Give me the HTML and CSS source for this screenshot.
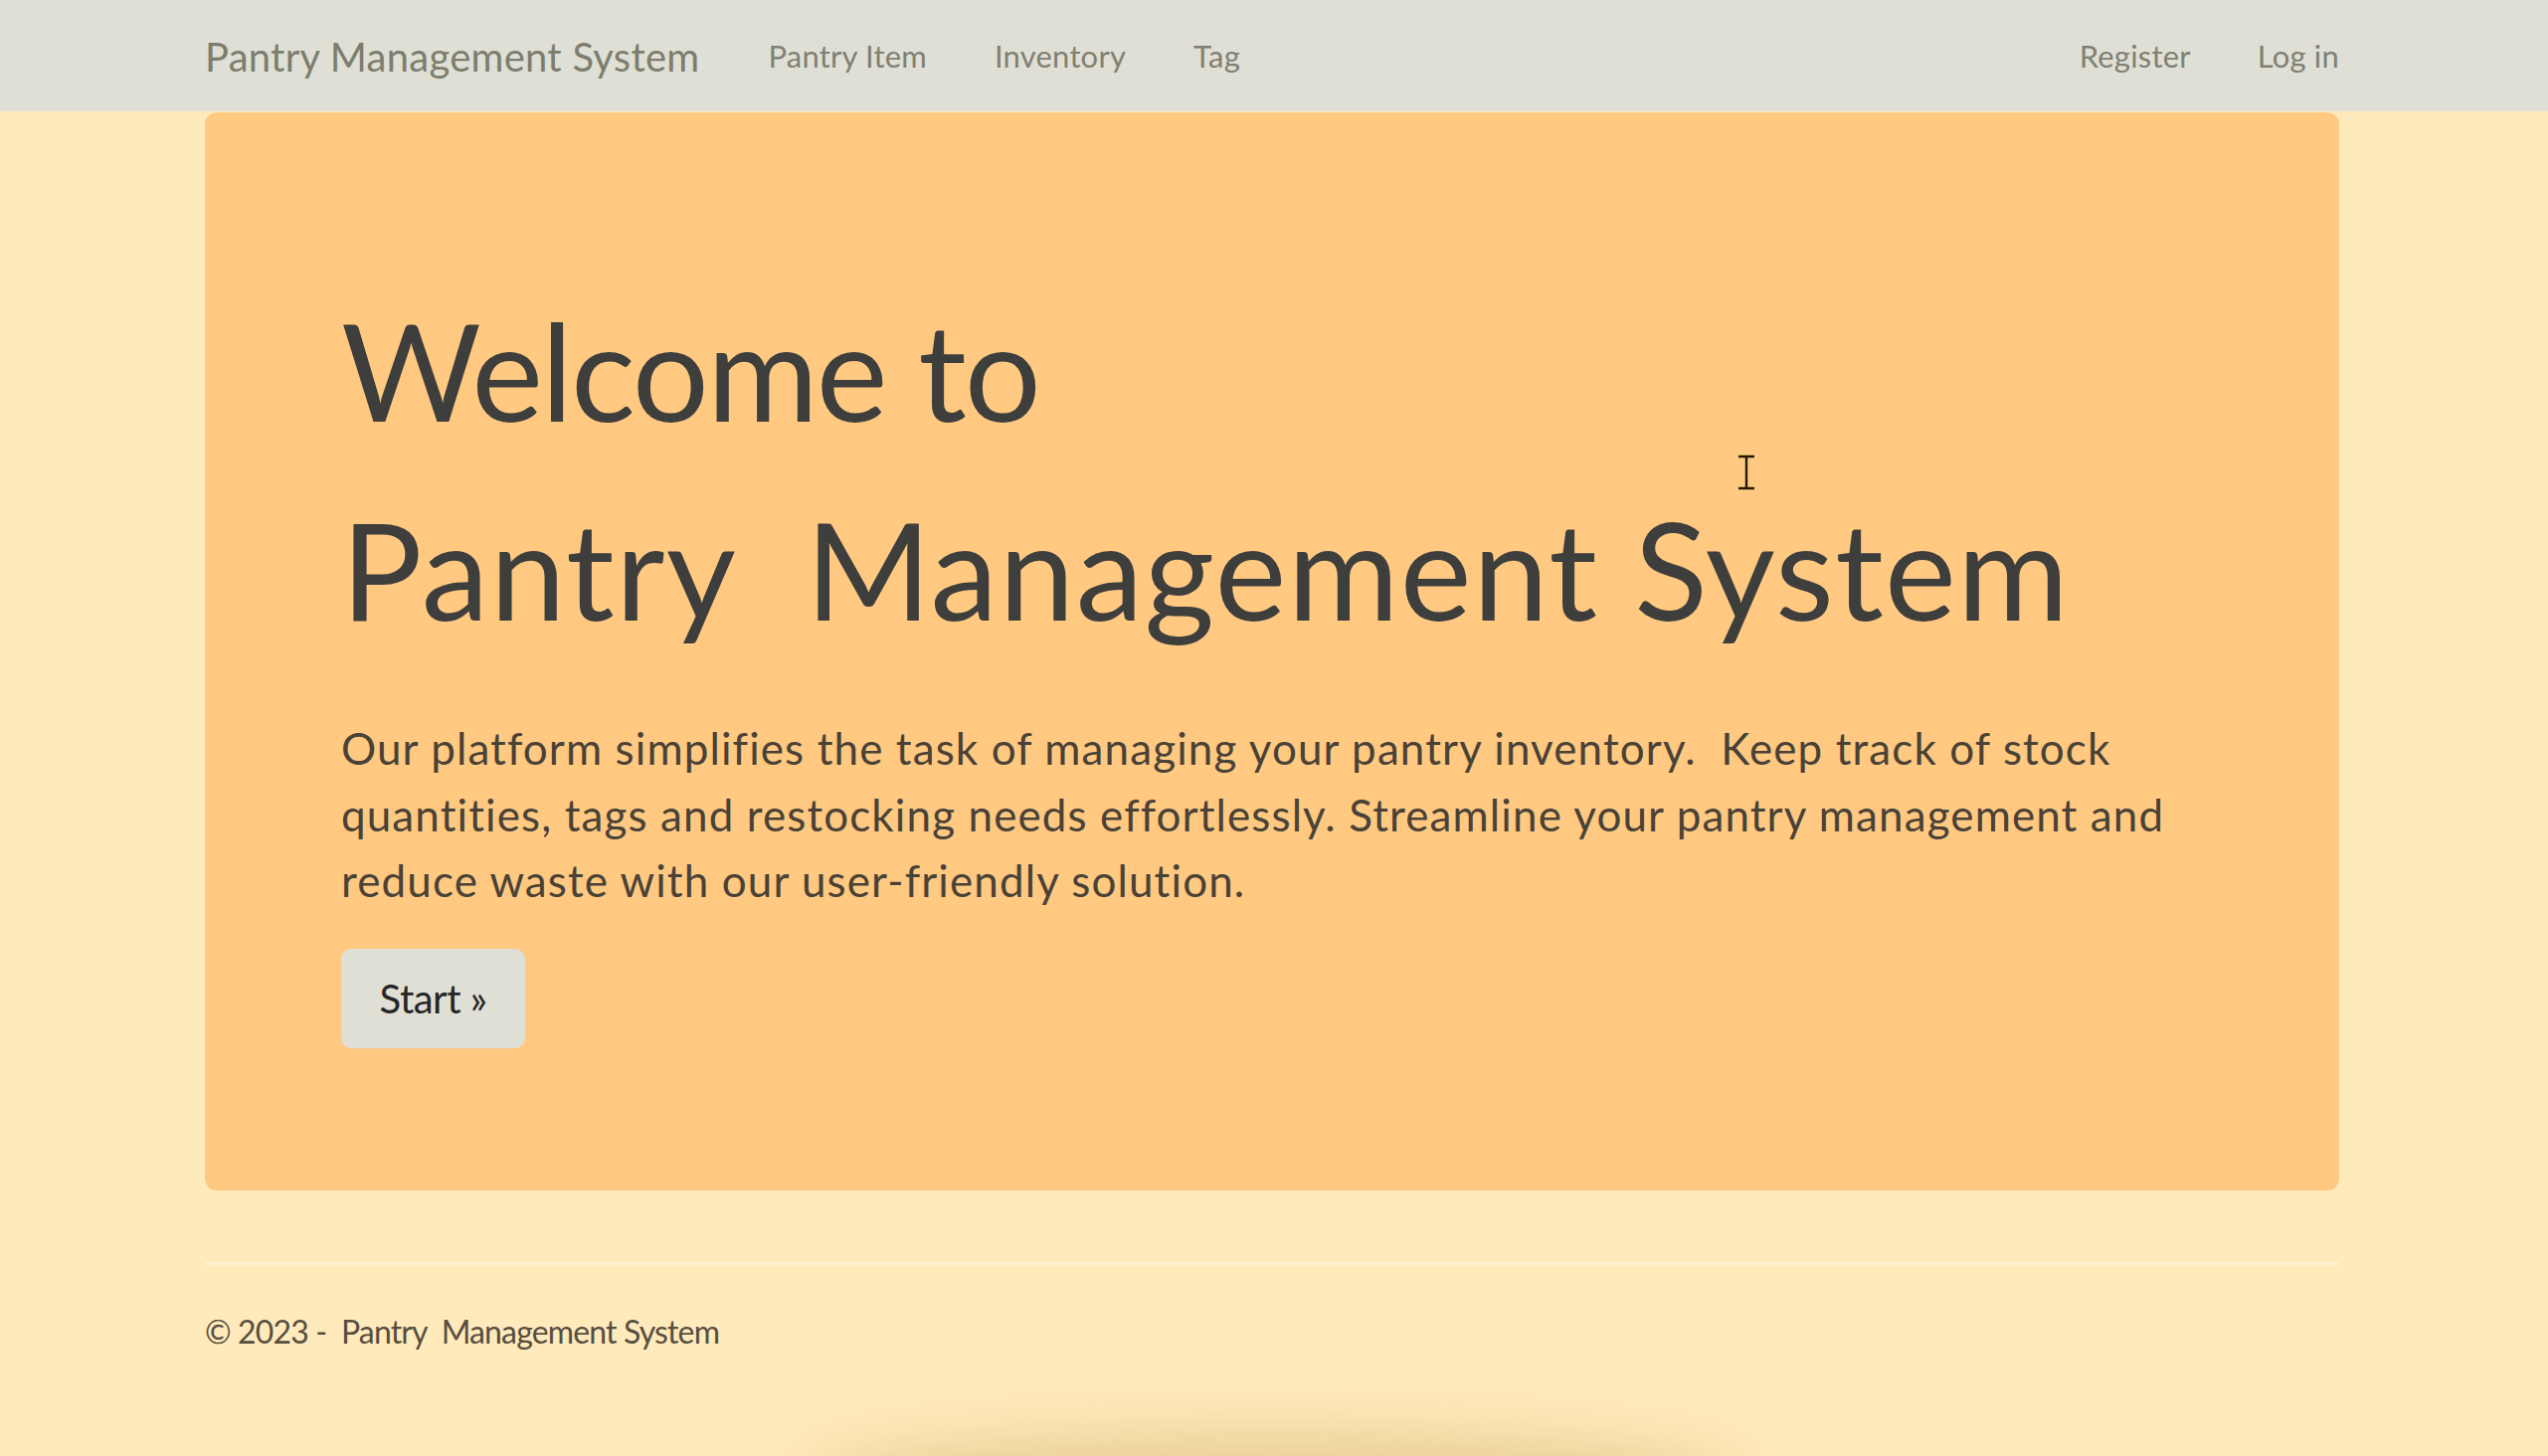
FILE: index.html
```html
<!DOCTYPE html>
<html lang="en">
<head>
<meta charset="utf-8">
<title>Home Page - Pantry Management System</title>
<link rel="stylesheet" href="styles.css">
</head>
<body>
<header class="navbar">
  <div class="container nav-inner">
    <a class="brand" href="#">Pantry Management System</a>
    <ul class="nav-list">
      <li><a href="#">Pantry Item</a></li>
      <li><a href="#">Inventory</a></li>
      <li><a href="#">Tag</a></li>
    </ul>
    <ul class="nav-list nav-right">
      <li><a href="#">Register</a></li>
      <li><a href="#">Log in</a></li>
    </ul>
  </div>
</header>
<main class="container">
  <section class="hero">
    <h1 class="hero-title"><span class="title-line">Welcome to</span><span class="title-line title-line-wide">Pantry&nbsp; Management System</span></h1>
    <p class="hero-text">Our platform simplifies the task of managing your pantry inventory.&nbsp; Keep track of stock quantities, tags and restocking needs effortlessly. Streamline your pantry management and reduce waste with our user-friendly solution.</p>
    <a class="btn-start" href="#">Start &raquo;</a>
  </section>
</main>
<footer class="container footer">
  <hr class="footer-rule">
  <p class="footer-text">&copy; 2023 -&nbsp; Pantry&nbsp; Management System</p>
</footer>
<svg class="cursor" width="24" height="38" viewBox="0 0 24 38" aria-hidden="true">
  <path d="M4 3 H20 M12 3 V35 M4 35 H20" stroke="#f6d27a" stroke-width="5" fill="none"/>
  <path d="M4 3 H20 M12 3 V35 M4 35 H20" stroke="#2a1606" stroke-width="2.4" fill="none"/>
</svg>
<div class="bottom-shade"></div>
</body>
</html>
```
FILE: styles.css
```css
* { box-sizing: border-box; }
html, body { margin: 0; padding: 0; }
body {
  background: #ffeabb;
  font-family: Lato, "Open Sans", sans-serif;
  color: #403c36;
  height: 1464px;
  overflow: hidden;
  position: relative;
}
a { text-decoration: none; }
.container {
  width: 2146px;
  margin-left: 206px;
}
.navbar {
  background: #dfdfd5;
  height: 112px;
}
.nav-inner {
  display: flex;
  align-items: center;
  height: 112px;
}
.brand {
  font-size: 40px;
  color: #7d7d6e;
  margin-right: 69px;
  padding-top: 2px;
  letter-spacing: 0.25px;
}
.nav-list {
  list-style: none;
  margin: 0;
  padding: 0;
  display: flex;
  gap: 68px;
}
.nav-list a {
  font-size: 31px;
  color: #808072;
  letter-spacing: 0.2px;
}
.nav-right { margin-left: auto; gap: 67px; }
.hero {
  background: #ffc982;
  border-radius: 12px;
  margin-top: 1px;
  height: 1084px;
  padding: 159px 137px 0;
}
.hero-title {
  margin: 0;
  font-weight: 400;
  font-size: 136px;
  line-height: 200px;
  color: #3e3e3c;
  letter-spacing: -2px;
}
.title-line { display: block; }
.title-line-wide { letter-spacing: 1.3px; }
.hero-text {
  margin: 47px 0 0;
  font-size: 44px;
  line-height: 66.5px;
  color: #4a4236;
  letter-spacing: 1.1px;
}
.btn-start {
  display: inline-flex;
  align-items: center;
  justify-content: center;
  margin-top: 35px;
  width: 185px;
  height: 100px;
  background: #dfdfd5;
  border-radius: 10px;
  font-size: 40px;
  color: #262626;
  letter-spacing: -0.5px;
}
.footer-rule {
  margin: 72px 0 0;
  border: 0;
  border-top: 3px solid #fff0d2;
}
.footer-text {
  margin: 47px 0 0;
  font-size: 32px;
  color: #574e40;
  letter-spacing: -0.85px;
}
.cursor {
  position: absolute;
  left: 1744px;
  top: 456px;
}
.bottom-shade {
  position: absolute;
  left: 50%;
  bottom: -50px;
  width: 900px;
  height: 50px;
  transform: translateX(-50%);
  border-radius: 50%;
  box-shadow: 0 0 60px 20px rgba(170, 130, 40, 0.28);
  background: rgba(170, 130, 40, 0.28);
}
```
